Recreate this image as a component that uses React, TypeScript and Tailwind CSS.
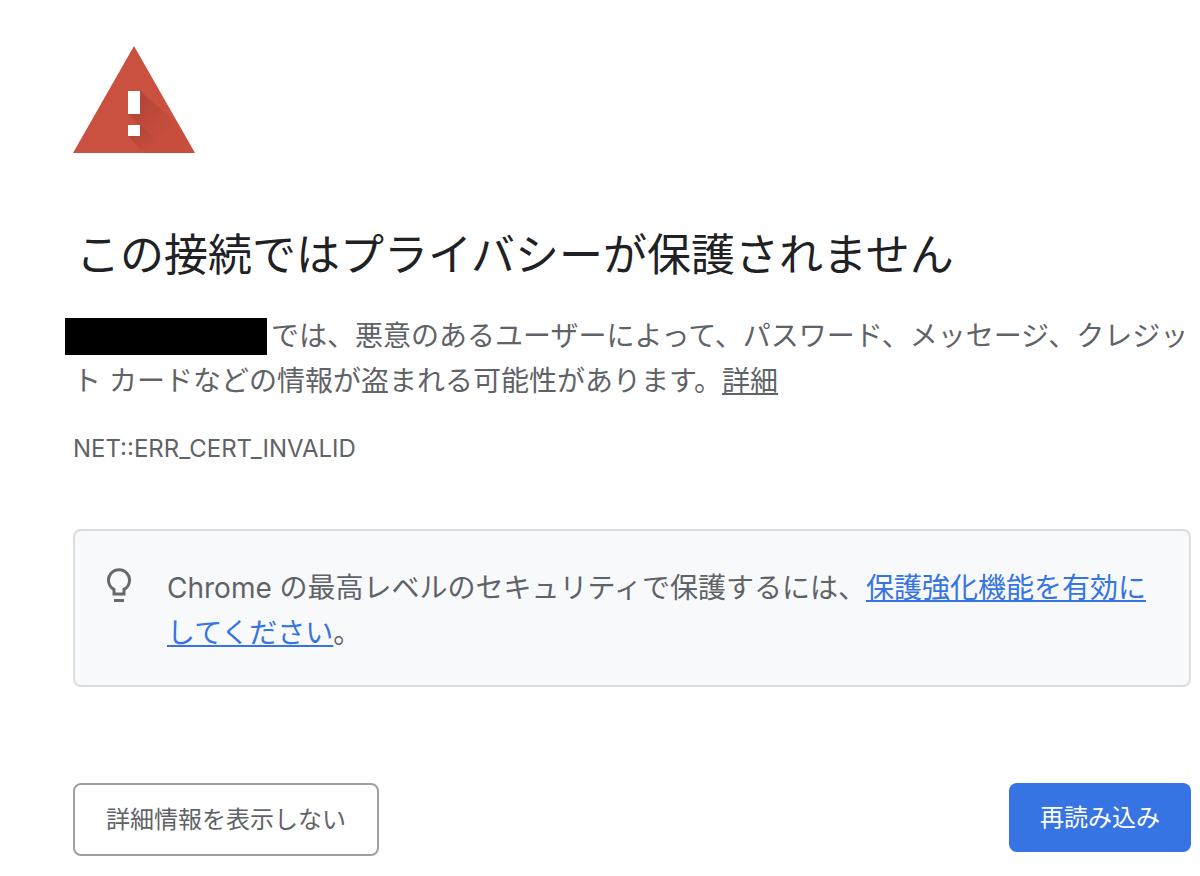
export default function App() {
  return (
    <main lang="ja" className="bg-white pt-[46px] pr-[9px] pb-5 pl-[73px] font-['Inter','Noto_Sans_CJK_JP',sans-serif] text-[#5f6368]">
      <svg viewBox="0 0 122 107" className="h-[107px] w-[122px]" role="img" aria-label="警告">
        <defs>
          <linearGradient id="shade" gradientUnits="userSpaceOnUse" x1="58" y1="60" x2="90" y2="92">
            <stop offset="0" stopColor="#a33f33" stopOpacity="0.65" />
            <stop offset="1" stopColor="#b8422f" stopOpacity="0.15" />
          </linearGradient>
          <linearGradient id="dotShade" gradientUnits="userSpaceOnUse" x1="61" y1="84" x2="80" y2="103">
            <stop offset="0" stopColor="#a33f33" stopOpacity="0.65" />
            <stop offset="1" stopColor="#b8422f" stopOpacity="0.15" />
          </linearGradient>
        </defs>
        <path d="M61 0L122 107H0Z" fill="#ca5040" />
        <path d="M67 45L106 79L122 107H94L55 68Z" fill="url(#shade)" />
        <path d="M67 79L95 107H72L55 90Z" fill="url(#dotShade)" />
        <path d="M55 45H67V68H55ZM55 79H67V90H55Z" fill="#fff" />
      </svg>
      <h1 className="mt-[69px] pl-[3px] text-[44px] leading-[66px] font-normal text-[#202124]">この接続ではプライバシーが保護されません</h1>
      <p className="mt-[26px] text-[28px] leading-[45px]">
        <span className="-ml-2 mr-1 inline-block h-[37px] w-[202px] bg-black align-[-9px]" />では、悪意のあるユーザーによって、パスワード、メッセージ、クレジット カードなどの情報が盗まれる可能性があります。<a href="#details" className="underline">詳細</a>
      </p>
      <p className="mt-[27px] text-[24px] leading-[36px]">NET::ERR_CERT_INVALID</p>
      <section className="mt-[62px] flex rounded-lg border-2 border-[#dadce0] bg-[#f8f9fb] px-8 pt-[35px] pb-[29px]">
        <svg viewBox="0 0 24 34" className="mt-0.5 h-[34px] w-6 shrink-0" fill="none" stroke="#696969" strokeWidth="3" aria-hidden="true">
          <path d="M7 26V21.4A10.5 10.5 0 1 1 17 21.4V26Z" />
          <path d="M7 32.5H17" />
        </svg>
        <p className="ml-9 text-[28px] leading-[45px]">Chrome の最高レベルのセキュリティで保護するには、<a href="#protect" className="text-[#3574e2] underline">保護強化機能を有効にしてください</a>。</p>
      </section>
      <div className="mt-24 flex items-start justify-between">
        <button type="button" className="h-[73px] rounded-lg border-2 border-[#9aa0a6] px-[31px] text-[24px]">詳細情報を表示しない</button>
        <button type="button" className="h-[69px] rounded-lg bg-[#3574e2] px-[31px] text-[24px] text-white">再読み込み</button>
      </div>
    </main>
  );
}
